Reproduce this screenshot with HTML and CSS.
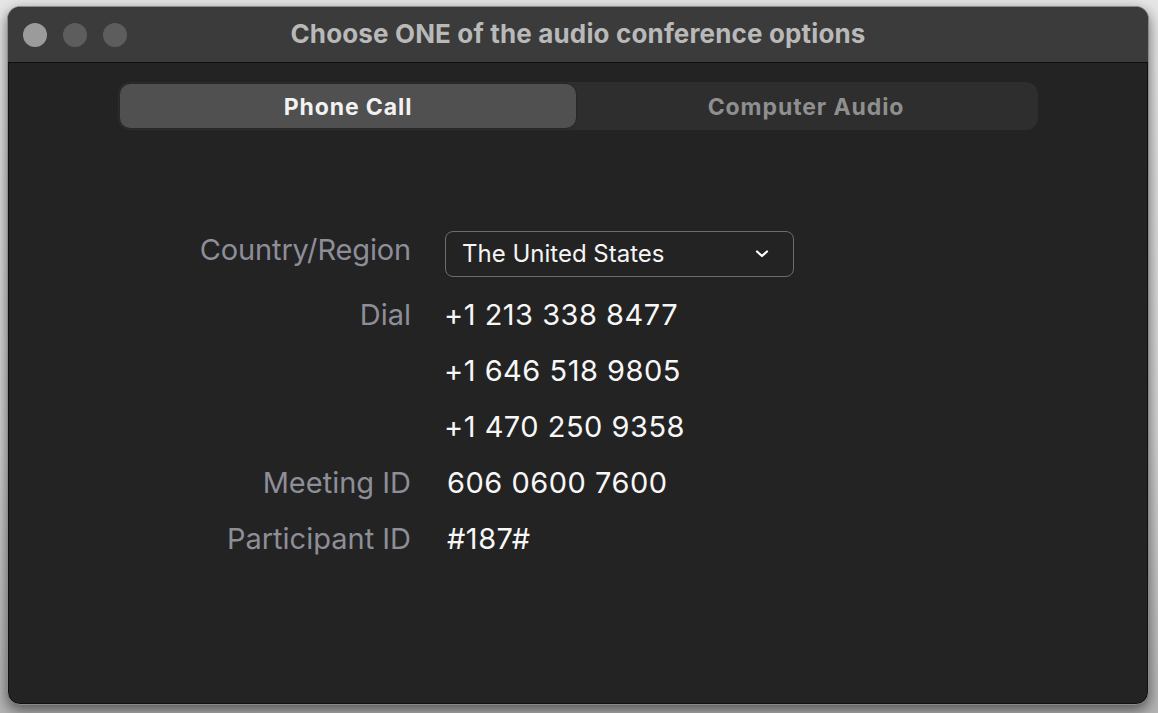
FILE: index.html
```html
<!DOCTYPE html>
<html>
<head>
<meta charset="utf-8">
<link rel="stylesheet" href="styles.css">
</head>
<body>
<div class="window">
  <div class="titlebar">
    <div class="lights">
      <span class="light light-close"></span>
      <span class="light"></span>
      <span class="light"></span>
    </div>
    <div class="title">Choose ONE of the audio conference options</div>
  </div>
  <div class="content">
    <div class="segmented">
      <div class="segment active">Phone Call</div>
      <div class="segment">Computer Audio</div>
    </div>
    <div class="form">
      <div class="label label-select">Country/Region</div>
      <div class="value value-select">
        <div class="select">
          <span>The United States</span>
          <svg class="chev" width="14" height="10" viewBox="0 0 14 10"><polyline points="2,2.5 7,7 12,2.5" fill="none" stroke="#ffffff" stroke-width="2.2" stroke-linecap="round" stroke-linejoin="round"/></svg>
        </div>
      </div>
      <div class="label">Dial</div>
      <div class="value">+1 213 338 8477</div>
      <div class="label"></div>
      <div class="value">+1 646 518 9805</div>
      <div class="label"></div>
      <div class="value">+1 470 250 9358</div>
      <div class="label">Meeting ID</div>
      <div class="value indent">606 0600 7600</div>
      <div class="label">Participant ID</div>
      <div class="value indent">#187#</div>
    </div>
  </div>
</div>
</body>
</html>
```

FILE: styles.css
```css
html, body {
  margin: 0;
  padding: 0;
}
body {
  width: 1158px;
  height: 713px;
  background: linear-gradient(#e6e6e6 0%, #d4d4d4 60%, #b4b4b4 100%);
  font-family: Inter, "Noto Sans", sans-serif;
  overflow: hidden;
}
.window {
  margin: 6px 0 0 7px;
  width: 1140px;
  height: 697px;
  border: 1px solid #8a8a8a;
  border-radius: 13px;
  background: #232323;
  box-shadow: 0 5px 14px rgba(0,0,0,0.55), inset 0 0 0 1px #101010;
  overflow: hidden;
  display: flex;
  flex-direction: column;
}
.titlebar {
  height: 55px;
  flex: none;
  background: #3a3b3a;
  border-bottom: 1px solid #0e0e0e;
  display: flex;
  align-items: center;
  position: relative;
}
.lights {
  display: flex;
  gap: 16px;
  padding-left: 15px;
}
.light {
  width: 24px;
  height: 24px;
  border-radius: 50%;
  background: #5c5d5c;
}
.light-close {
  background: #9b9b9b;
}
.title {
  position: absolute;
  left: 0;
  right: 0;
  top: 0;
  bottom: 0;
  display: flex;
  align-items: center;
  justify-content: center;
  color: #b9b9b9;
  font-weight: 700;
  font-size: 26px;
  letter-spacing: 0.15px;
  padding-bottom: 3px;
}
.content {
  flex: 1;
  display: flex;
  flex-direction: column;
  align-items: center;
  padding-top: 19px;
}
.segmented {
  width: 916px;
  height: 44px;
  padding: 2px;
  border-radius: 12px;
  background: #2e2e2e;
  display: flex;
}
.segment {
  flex: 1;
  display: flex;
  align-items: center;
  justify-content: center;
  color: #8f8f8f;
  font-weight: 700;
  font-size: 23px;
  letter-spacing: 0.9px;
  border-radius: 10px;
  padding-top: 1px;
}
.segment.active {
  flex: 0 0 456px;
  background: #505050;
  color: #f2f2f2;
  box-shadow: 0 0 2px rgba(0,0,0,0.5);
}
.form {
  align-self: flex-start;
  margin-left: 153px;
  margin-top: 101px;
  display: grid;
  grid-template-columns: 250px auto;
  column-gap: 33px;
  grid-auto-rows: 56px;
}
.label {
  text-align: right;
  color: #8e8e98;
  font-size: 29px;
  line-height: 56px;
}
.label-select {
  letter-spacing: -0.15px;
}
.value {
  color: #f7f7f7;
  font-size: 29px;
  letter-spacing: 0.5px;
  line-height: 56px;
}
.indent {
  padding-left: 3px;
}
.label-select {
  line-height: 38px;
  height: 46px;
  margin-bottom: 11px;
}
.value-select {
  height: 46px;
  margin-bottom: 11px;
  padding-left: 1px;
}
.select {
  height: 44px;
  border: 1px solid #6d6d6d;
  border-radius: 8px;
  box-sizing: content-box;
  display: flex;
  align-items: center;
  justify-content: space-between;
  padding: 0 24px 0 0;
  width: 323px;
}
.select span {
  padding-left: 16px;
  font-size: 24px;
  letter-spacing: 0;
  color: #f5f5f5;
  line-height: 44px;
}
.chev {
  display: block;
}
```
